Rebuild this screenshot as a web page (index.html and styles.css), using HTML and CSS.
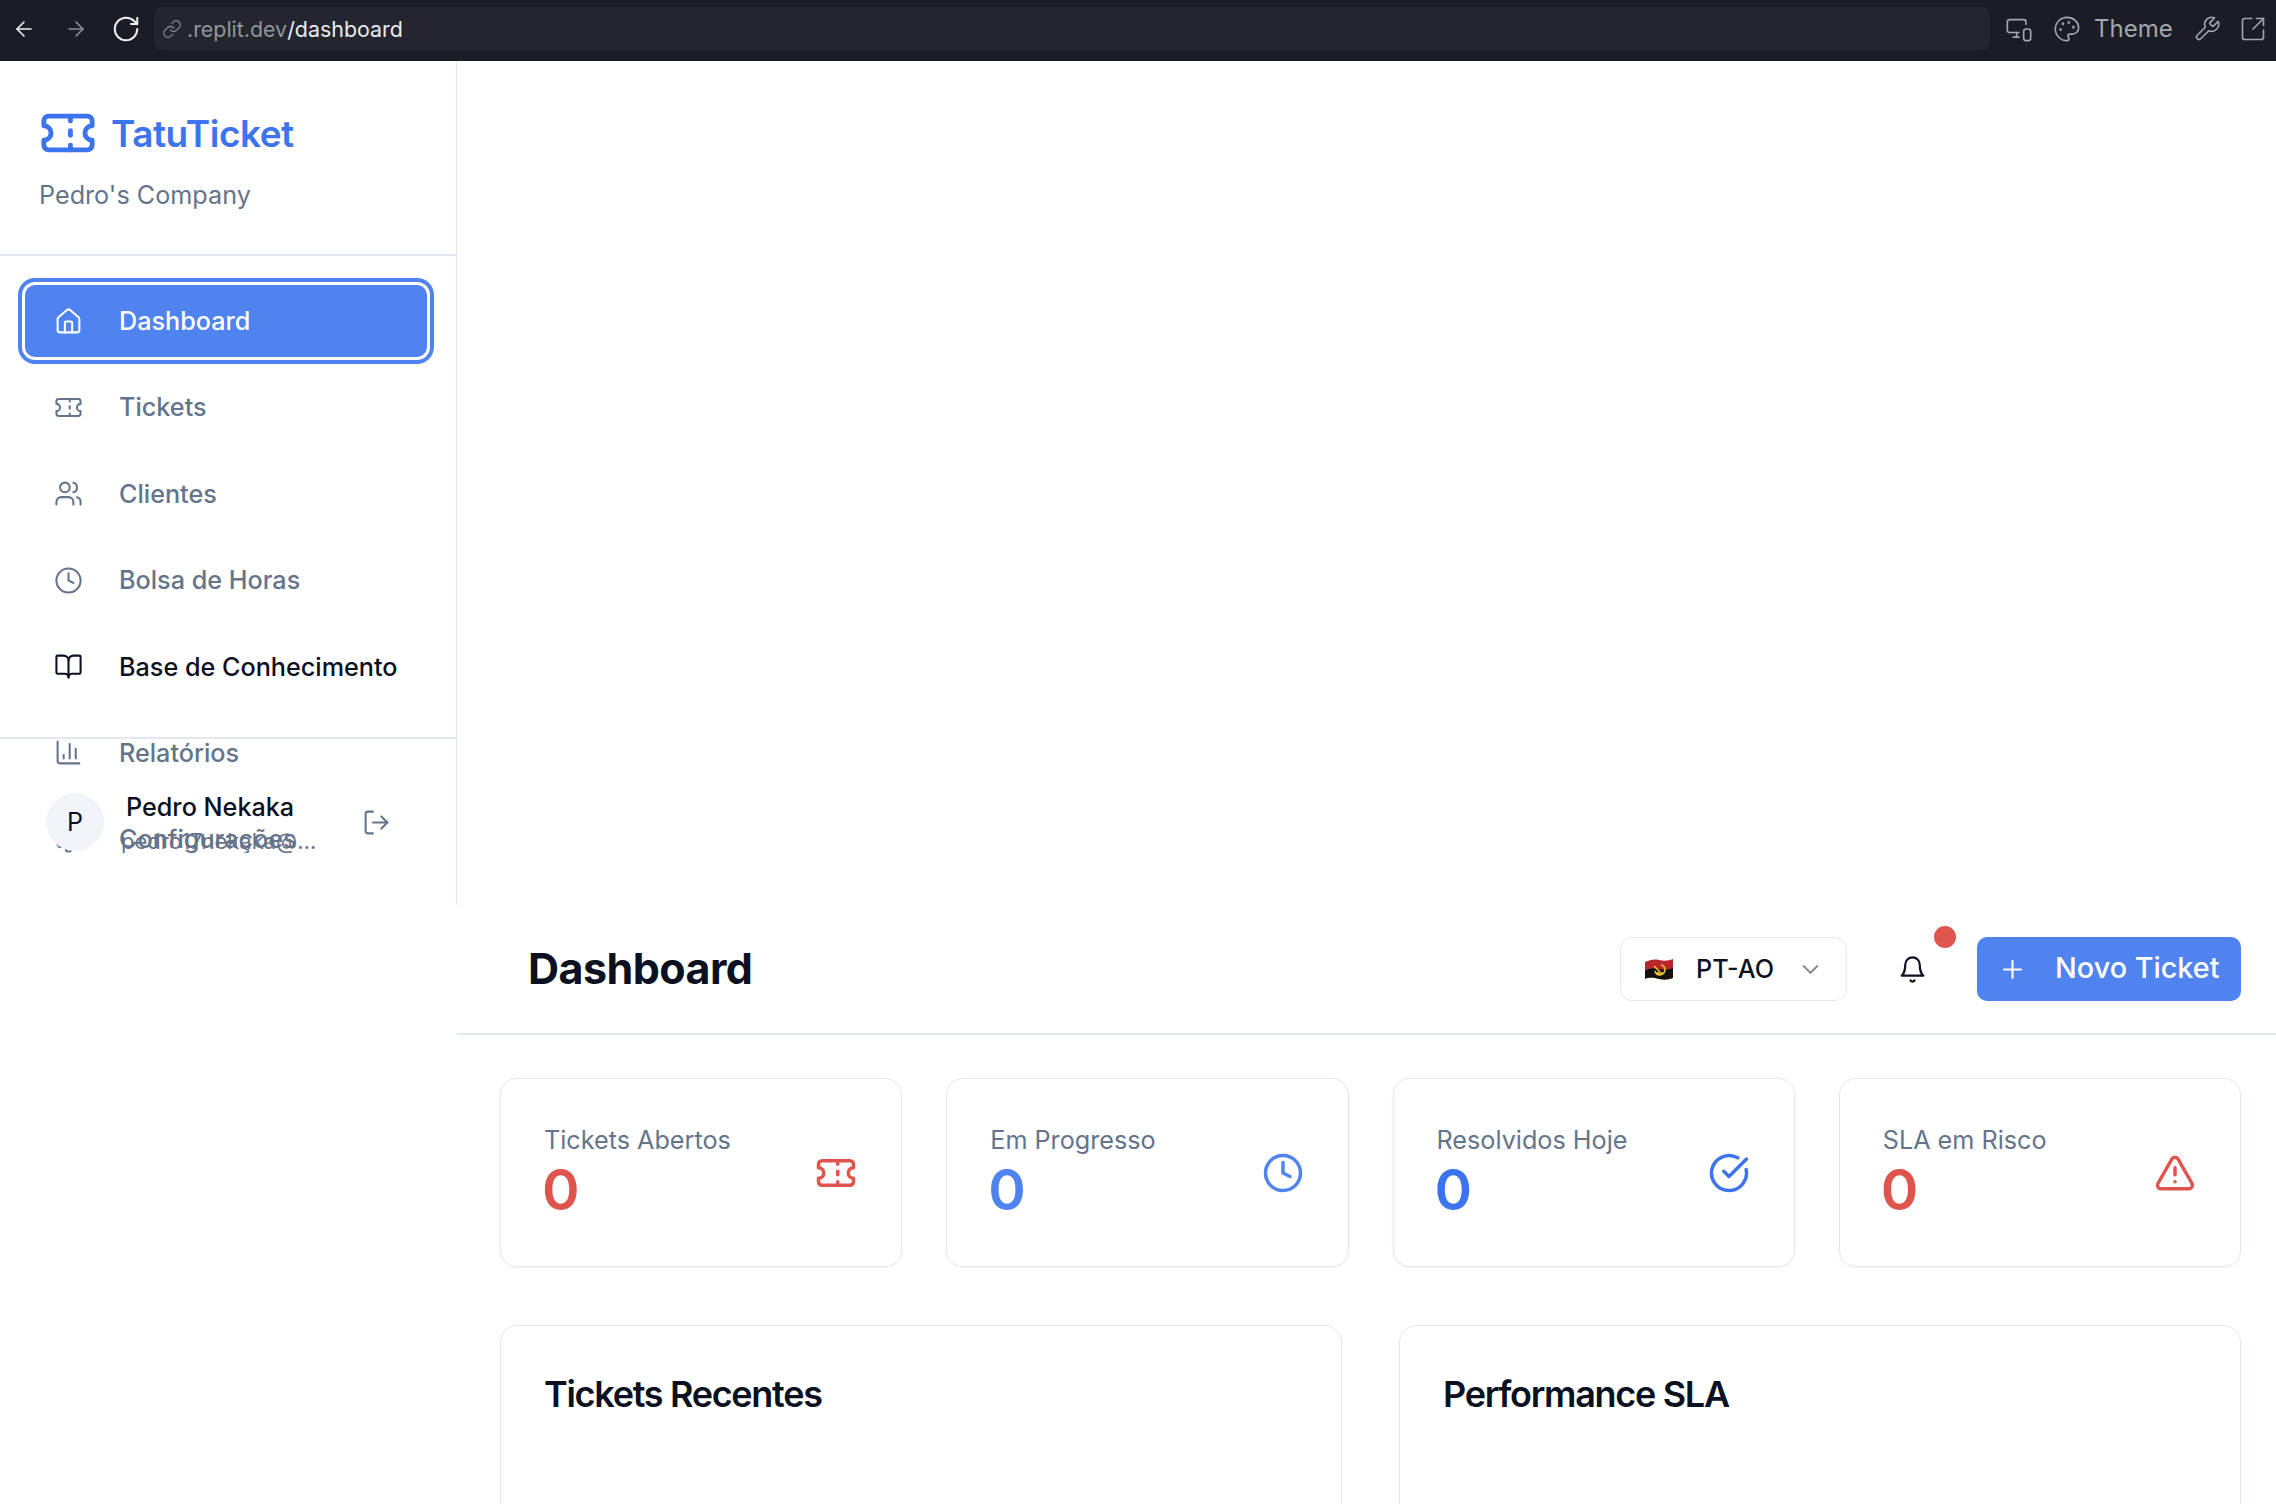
FILE: index.html
```html
<!DOCTYPE html>
<html lang="pt">
<head>
<meta charset="utf-8">
<title>TatuTicket</title>
<link rel="stylesheet" href="styles.css">
</head>
<body>
<svg class="defs" aria-hidden="true">
  <symbol id="i-ticket" viewBox="0 0 24 24"><path d="M2 9a3 3 0 0 1 0 6v2a2 2 0 0 0 2 2h16a2 2 0 0 0 2-2v-2a3 3 0 0 1 0-6V7a2 2 0 0 0-2-2H4a2 2 0 0 0-2 2Z"/><path d="M13 5v2"/><path d="M13 17v2"/><path d="M13 11v2"/></symbol>
  <symbol id="i-home" viewBox="0 0 24 24"><path d="M15 21v-8a1 1 0 0 0-1-1h-4a1 1 0 0 0-1 1v8"/><path d="M3 10a2 2 0 0 1 .709-1.528l7-5.999a2 2 0 0 1 2.582 0l7 5.999A2 2 0 0 1 21 10v9a2 2 0 0 1-2 2H5a2 2 0 0 1-2-2z"/></symbol>
  <symbol id="i-users" viewBox="0 0 24 24"><path d="M16 21v-2a4 4 0 0 0-4-4H6a4 4 0 0 0-4 4v2"/><circle cx="9" cy="7" r="4"/><path d="M22 21v-2a4 4 0 0 0-3-3.87"/><path d="M16 3.13a4 4 0 0 1 0 7.75"/></symbol>
  <symbol id="i-clock" viewBox="0 0 24 24"><circle cx="12" cy="12" r="10"/><polyline points="12 6 12 12 16 14"/></symbol>
  <symbol id="i-book" viewBox="0 0 24 24"><path d="M12 7v14"/><path d="M3 18a1 1 0 0 1-1-1V4a1 1 0 0 1 1-1h5a4 4 0 0 1 4 4 4 4 0 0 1 4-4h5a1 1 0 0 1 1 1v13a1 1 0 0 1-1 1h-6a3 3 0 0 0-3 3 3 3 0 0 0-3-3z"/></symbol>
  <symbol id="i-chart" viewBox="0 0 24 24"><path d="M3 3v16a2 2 0 0 0 2 2h16"/><path d="M18 17V9"/><path d="M13 17V5"/><path d="M8 17v-3"/></symbol>
  <symbol id="i-settings" viewBox="0 0 24 24"><path d="M12.22 2h-.44a2 2 0 0 0-2 2v.18a2 2 0 0 1-1 1.73l-.43.25a2 2 0 0 1-2 0l-.15-.08a2 2 0 0 0-2.73.73l-.22.38a2 2 0 0 0 .73 2.73l.15.1a2 2 0 0 1 1 1.72v.51a2 2 0 0 1-1 1.74l-.15.09a2 2 0 0 0-.73 2.73l.22.38a2 2 0 0 0 2.73.73l.15-.08a2 2 0 0 1 2 0l.43.25a2 2 0 0 1 1 1.73V20a2 2 0 0 0 2 2h.44a2 2 0 0 0 2-2v-.18a2 2 0 0 1 1-1.73l.43-.25a2 2 0 0 1 2 0l.15.08a2 2 0 0 0 2.73-.73l.22-.39a2 2 0 0 0-.73-2.73l-.15-.08a2 2 0 0 1-1-1.74v-.5a2 2 0 0 1 1-1.74l.15-.09a2 2 0 0 0 .73-2.73l-.22-.38a2 2 0 0 0-2.73-.73l-.15.08a2 2 0 0 1-2 0l-.43-.25a2 2 0 0 1-1-1.73V4a2 2 0 0 0-2-2z"/><circle cx="12" cy="12" r="3"/></symbol>
  <symbol id="i-logout" viewBox="0 0 24 24"><path d="M9 21H5a2 2 0 0 1-2-2V5a2 2 0 0 1 2-2h4"/><polyline points="16 17 21 12 16 7"/><line x1="21" y1="12" x2="9" y2="12"/></symbol>
  <symbol id="i-bell" viewBox="0 0 24 24"><path d="M6 8a6 6 0 0 1 12 0c0 7 3 9 3 9H3s3-2 3-9"/><path d="M10.3 21a1.94 1.94 0 0 0 3.4 0"/></symbol>
  <symbol id="i-chevron" viewBox="0 0 24 24"><path d="m6 9 6 6 6-6"/></symbol>
  <symbol id="i-plus" viewBox="0 0 24 24"><path d="M5 12h14"/><path d="M12 5v14"/></symbol>
  <symbol id="i-check" viewBox="0 0 24 24"><path d="M21.801 10A10 10 0 1 1 17 3.335"/><path d="m9 11 3 3L22 4"/></symbol>
  <symbol id="i-alert" viewBox="0 0 24 24"><path d="m21.73 18-8-14a2 2 0 0 0-3.48 0l-8 14A2 2 0 0 0 4 21h16a2 2 0 0 0 1.73-3"/><path d="M12 9v4"/><path d="M12 17h.01"/></symbol>
  <symbol id="i-back" viewBox="0 0 24 24"><path d="m12 19-7-7 7-7"/><path d="M19 12H5"/></symbol>
  <symbol id="i-forward" viewBox="0 0 24 24"><path d="M5 12h14"/><path d="m12 5 7 7-7 7"/></symbol>
  <symbol id="i-reload" viewBox="0 0 24 24"><path d="M21 12a9 9 0 1 1-9-9c2.52 0 4.93 1 6.74 2.74L21 8"/><path d="M21 3v5h-5"/></symbol>
  <symbol id="i-link" viewBox="0 0 24 24"><path d="M10 13a5 5 0 0 0 7.54.54l3-3a5 5 0 0 0-7.07-7.07l-1.72 1.71"/><path d="M14 11a5 5 0 0 0-7.54-.54l-3 3a5 5 0 0 0 7.07 7.07l1.71-1.71"/></symbol>
  <symbol id="i-devices" viewBox="0 0 24 24"><path d="M18 8V6a2 2 0 0 0-2-2H4a2 2 0 0 0-2 2v7a2 2 0 0 0 2 2h8"/><path d="M10 19v-4"/><path d="M7 19h5"/><rect x="16" y="12" width="6" height="10" rx="2"/></symbol>
  <symbol id="i-palette" viewBox="0 0 24 24"><circle cx="13.5" cy="6.5" r=".5"/><circle cx="17.5" cy="10.5" r=".5"/><circle cx="8.5" cy="7.5" r=".5"/><circle cx="6.5" cy="12.5" r=".5"/><path d="M12 2C6.5 2 2 6.5 2 12s4.5 10 10 10c.926 0 1.648-.746 1.648-1.688 0-.437-.18-.835-.437-1.125-.29-.289-.438-.652-.438-1.125a1.64 1.64 0 0 1 1.668-1.668h1.996c3.051 0 5.555-2.503 5.555-5.554C21.965 6.012 17.461 2 12 2z"/></symbol>
  <symbol id="i-wrench" viewBox="0 0 24 24"><path d="M14.7 6.3a1 1 0 0 0 0 1.4l1.6 1.6a1 1 0 0 0 1.4 0l3.77-3.77a6 6 0 0 1-7.94 7.94l-6.91 6.91a2.12 2.12 0 0 1-3-3l6.91-6.91a6 6 0 0 1 7.94-7.94l-3.76 3.76z"/></symbol>
  <symbol id="i-external" viewBox="0 0 24 24"><path d="M21 13v6a2 2 0 0 1-2 2H5a2 2 0 0 1-2-2V5a2 2 0 0 1 2-2h6"/><path d="m21 3-9 9"/><path d="M15 3h6v6"/></symbol>
</svg>

<div class="page">
  <header class="browser">
    <div class="browser-nav">
      <svg class="ico ico-browser bright"><use href="#i-back"/></svg>
      <svg class="ico ico-browser dim"><use href="#i-forward"/></svg>
      <svg class="ico ico-reload bright"><use href="#i-reload"/></svg>
    </div>
    <div class="address">
      <svg class="ico ico-link"><use href="#i-link"/></svg>
      <span class="addr-host">.replit.dev</span><span class="addr-path">/dashboard</span>
    </div>
    <div class="browser-tools">
      <svg class="ico ico-tool"><use href="#i-devices"/></svg>
      <svg class="ico ico-tool"><use href="#i-palette"/></svg>
      <span class="tool-label">Theme</span>
      <svg class="ico ico-tool"><use href="#i-wrench"/></svg>
      <svg class="ico ico-tool tool-last"><use href="#i-external"/></svg>
    </div>
  </header>

  <div class="app">
    <aside class="sidebar">
      <div class="brand">
        <div class="brand-row">
          <svg class="ico ico-logo"><use href="#i-ticket"/></svg>
          <span class="brand-name">TatuTicket</span>
        </div>
        <div class="brand-company">Pedro's Company</div>
      </div>
      <nav class="nav">
        <a class="nav-item active"><svg class="ico ico-nav"><use href="#i-home"/></svg>Dashboard</a>
        <a class="nav-item"><svg class="ico ico-nav"><use href="#i-ticket"/></svg>Tickets</a>
        <a class="nav-item"><svg class="ico ico-nav"><use href="#i-users"/></svg>Clientes</a>
        <a class="nav-item"><svg class="ico ico-nav"><use href="#i-clock"/></svg>Bolsa de Horas</a>
        <a class="nav-item hovered"><svg class="ico ico-nav"><use href="#i-book"/></svg>Base de Conhecimento</a>
        <a class="nav-item"><svg class="ico ico-nav"><use href="#i-chart"/></svg>Relatórios</a>
        <a class="nav-item"><svg class="ico ico-nav"><use href="#i-settings"/></svg>Configurações</a>
      </nav>
      <div class="user">
        <div class="avatar">P</div>
        <div class="user-text">
          <div class="user-name">Pedro Nekaka</div>
          <div class="user-mail">pedro17nekaka@gmail.com</div>
        </div>
        <svg class="ico ico-logout"><use href="#i-logout"/></svg>
      </div>
    </aside>

    <main class="main">
      <div class="topbar">
        <h1 class="page-title">Dashboard</h1>
        <div class="actions">
          <button class="lang">
            <svg class="flag" viewBox="0 0 30 24"><path d="M1 5c5-2 9-3 14-2s9 1 14-1v10c-5 2-9 2-14 1S6 11 1 13z" fill="#b5272d"/><path d="M1 13c5-2 9-2 14-1s9 1 14-1v10c-5 2-9 2-14 1S6 20 1 22z" fill="#14110f"/><path d="M17 8a5 5 0 1 1-6 6M10 9l6 6M12 16h7" fill="none" stroke="#f2c230" stroke-width="1.6"/></svg>
            <span>PT-AO</span>
            <svg class="ico ico-chevron"><use href="#i-chevron"/></svg>
          </button>
          <div class="bell">
            <svg class="ico ico-bell"><use href="#i-bell"/></svg>
            <span class="bell-dot"></span>
          </div>
          <button class="primary">
            <svg class="ico ico-plus"><use href="#i-plus"/></svg>
            <span>Novo Ticket</span>
          </button>
        </div>
      </div>

      <div class="content">
        <section class="stats">
          <article class="stat">
            <div><div class="stat-label">Tickets Abertos</div><div class="stat-value red">0</div></div>
            <svg class="ico ico-stat red"><use href="#i-ticket"/></svg>
          </article>
          <article class="stat">
            <div><div class="stat-label">Em Progresso</div><div class="stat-value blue">0</div></div>
            <svg class="ico ico-stat blue"><use href="#i-clock"/></svg>
          </article>
          <article class="stat">
            <div><div class="stat-label">Resolvidos Hoje</div><div class="stat-value blue2">0</div></div>
            <svg class="ico ico-stat blue2"><use href="#i-check"/></svg>
          </article>
          <article class="stat">
            <div><div class="stat-label">SLA em Risco</div><div class="stat-value red">0</div></div>
            <svg class="ico ico-stat red"><use href="#i-alert"/></svg>
          </article>
        </section>
        <section class="panels">
          <article class="panel"><h2 class="panel-title">Tickets Recentes</h2></article>
          <article class="panel"><h2 class="panel-title">Performance SLA</h2></article>
        </section>
      </div>
    </main>
  </div>
</div>
</body>
</html>
```

FILE: styles.css
```css
* { box-sizing: border-box; }
html, body { margin: 0; height: 100%; }
body { font-family: Inter, "Liberation Sans", sans-serif; background: #fff; color: #0b1120; overflow: hidden; }
.defs { width: 0; height: 0; display: block; overflow: hidden; }
.ico { fill: none; stroke: currentColor; stroke-width: 2; stroke-linecap: round; stroke-linejoin: round; flex: none; display: block; }

.page { height: 1504px; display: flex; flex-direction: column; overflow: hidden; }

/* browser chrome */
.browser { height: 61px; flex: none; background: #1a1d26; display: flex; align-items: center; padding-bottom: 4px; }
.browser-nav { width: 154px; display: flex; align-items: center; padding-left: 12px; gap: 28px; flex: none; }
.ico-browser { width: 24px; height: 24px; stroke-width: 1.6; }
.ico-reload { width: 30px; height: 30px; stroke-width: 1.6; margin-left: -5px; }
.bright { color: #eceef2; }
.dim { color: #8b8f98; }
.address { flex: 1; height: 43px; background: #23262f; border-radius: 8px; display: flex; align-items: center; padding-left: 8px; font-size: 21.4px; }
.ico-link { width: 20px; height: 20px; color: #7f838c; stroke-width: 1.6; margin-right: 5px; }
.addr-host { color: #91959e; }
.addr-path { color: #e8eaee; }
.browser-tools { display: flex; align-items: center; color: #a3a6ae; width: 286px; padding-left: 15px; flex: none; gap: 20px; }
.ico-tool { width: 28px; height: 28px; stroke-width: 1.4; }
.tool-label { font-size: 24px; margin-left: -7px; }
.tool-last { margin-left: -2px; }

/* layout */
.app { flex: 1; display: grid; grid-template-columns: 457px 1fr; grid-template-rows: 844px auto; min-height: 0; }

/* sidebar */
.sidebar { grid-column: 1; grid-row: 1; position: relative; border-right: 1px solid #e2e8f0; height: 844px; overflow: hidden; }
.brand { height: 195px; border-bottom: 2px solid #e2e8f0; padding: 43px 0 0 39px; }
.brand-row { display: flex; align-items: center; gap: 14px; height: 58px; }
.ico-logo { width: 58px; height: 58px; color: #3c73ee; stroke-width: 2; }
.brand-name { font-size: 37px; font-weight: 600; color: #3c73ee; letter-spacing: -0.5px; }
.brand-company { font-size: 25.2px; color: #64748b; margin-top: 18px; }
.nav { display: flex; flex-direction: column; padding: 29px 29px 0 25px; gap: 14.4px; }
.nav-item { height: 72px; flex: none; display: flex; align-items: center; gap: 36px; padding-left: 29px; border-radius: 10px; color: #64748b; font-size: 25.2px; font-weight: 450; }
.nav-item.active { background: #4f83ef; color: #fff; box-shadow: 0 0 0 3px #fff, 0 0 0 7px #4f83ef; }
.nav-item.hovered { color: #0b1120; }
.ico-nav { width: 29px; height: 29px; stroke-width: 1.7; }
.user { position: absolute; left: 0; right: 0; bottom: 0; height: 168px; border-top: 2px solid #e2e8f0; display: flex; align-items: center; padding-left: 46px; }
.avatar { width: 58px; height: 58px; flex: none; border-radius: 50%; background: #f1f5f9; display: flex; align-items: center; justify-content: center; font-size: 25px; font-weight: 400; }
.user-text { width: 197px; margin-left: 17px; margin-right: 44px; padding-top: 5px; }
.user-name { font-size: 25.2px; font-weight: 450; margin-left: 5px; line-height: 32px; }
.user-mail { font-size: 22px; color: #64748b; white-space: nowrap; overflow: hidden; text-overflow: ellipsis; line-height: 36px; }
.ico-logout { width: 29px; height: 29px; color: #64748b; stroke-width: 1.7; }

/* main */
.main { grid-column: 2; grid-row: 2; min-width: 0; }
.topbar { height: 130px; border-bottom: 2px solid #e2e8f0; display: flex; align-items: center; justify-content: space-between; padding: 0 34px 0 71px; }
.page-title { margin: 0 0 2px; font-size: 43px; font-weight: 700; letter-spacing: -0.55px; }
.actions { display: flex; align-items: center; }
.lang { width: 227px; height: 64px; background: #fff; border: 1.5px solid #e2e8f0; border-radius: 12px; display: flex; align-items: center; padding: 0 22px 0 23px; font: 450 25.2px Inter, sans-serif; color: #0b1120; }
.flag { width: 30px; height: 24px; flex: none; margin-right: 22px; }
.ico-chevron { width: 27px; height: 27px; margin-left: auto; color: #7c8494; stroke-width: 1.8; }
.bell { width: 130px; height: 64px; display: flex; align-items: center; justify-content: center; position: relative; }
.ico-bell { width: 29px; height: 29px; stroke-width: 1.8; color: #0b1120; }
.bell-dot { position: absolute; top: -11px; right: 21px; width: 22px; height: 22px; border-radius: 50%; background: #e0544e; }
.primary { width: 264px; margin-right: 1px; height: 64px; background: #4f83ef; color: #fff; border: 0; border-radius: 10px; display: flex; align-items: center; padding: 0 0 3px 21px; font: 450 28.8px Inter, sans-serif; gap: 28px; }
.ico-plus { width: 29px; height: 29px; stroke-width: 1.8; margin-top: 3px; }

.content { padding: 43px 35px 0 43px; }
.stats { display: grid; grid-template-columns: repeat(4, 1fr); gap: 44px; }
.stat { height: 189px; border: 1.5px solid #e2e8f0; border-radius: 17px; box-shadow: 0 1px 3px rgba(15, 23, 42, 0.06); display: flex; align-items: center; justify-content: space-between; padding: 0 44px 0 43px; }
.stat-label { font-size: 25.2px; color: #64748b; line-height: 33px; }
.stat-value { font-size: 57px; font-weight: 600; line-height: 65px; margin-left: -2px; }
.ico-stat { width: 42px; height: 42px; stroke-width: 2; }
.red { color: #e0544e; }
.blue { color: #4f83ef; }
.blue2 { color: #3c73ee; }
.panels { display: grid; grid-template-columns: repeat(2, 1fr); gap: 57px; margin-top: 58px; }
.panel { height: 400px; border: 1.5px solid #e2e8f0; border-radius: 17px; padding: 46px 44px 44px 43px; }
.panel-title { margin: 0; font-size: 36px; font-weight: 600; letter-spacing: -1.3px; line-height: 44px; }
```
